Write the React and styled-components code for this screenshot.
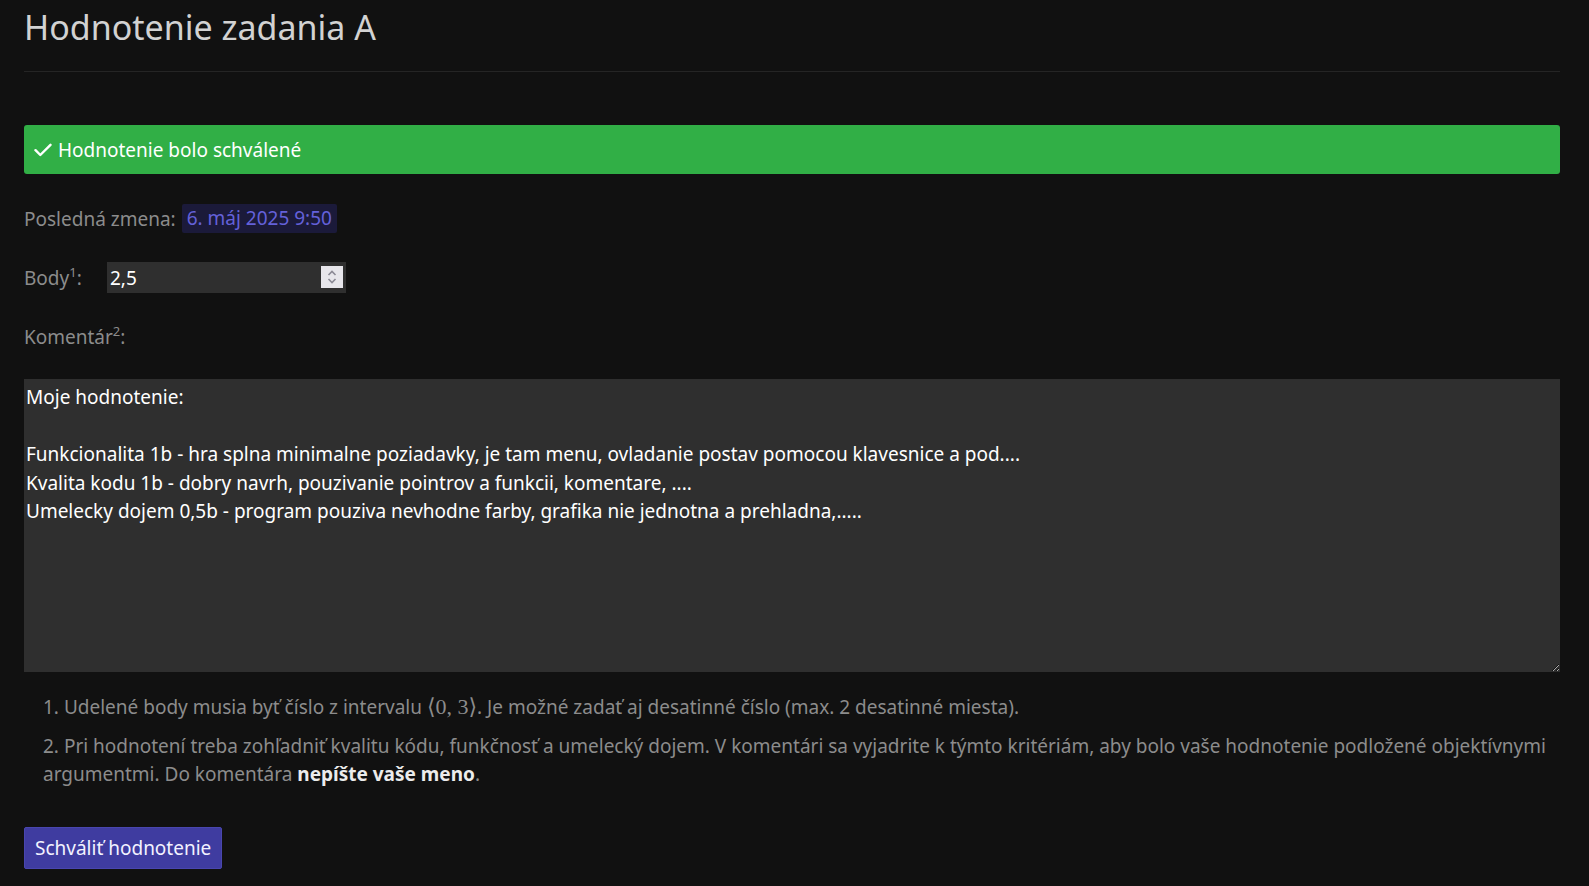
import styled, { createGlobalStyle } from 'styled-components';

const GlobalStyle = createGlobalStyle`
  html, body {
    margin: 0;
    padding: 0;
    background: #111111;
  }
  body {
    font-family: "Noto Sans", "Open Sans", sans-serif;
    font-size: 19px;
    line-height: 28px;
    color: #8c8c8c;
  }
`;

const Page = styled.div`
  padding: 5px 29px 17px 24px;
`;

const Title = styled.h1`
  margin: 0;
  font-size: 34px;
  line-height: 45px;
  font-weight: 400;
  color: #d2d2d2;
  padding-bottom: 21px;
  border-bottom: 1px solid #252525;
`;

const Alert = styled.div`
  margin-top: 53px;
  display: flex;
  align-items: center;
  gap: 6px;
  padding: 11px 10px 10px;
  background: #31af46;
  border-radius: 3px;
  color: #ffffff;
`;

const Field = styled.div`
  display: flex;
  align-items: center;
  margin-top: ${p => p.$gap}px;
  min-height: ${p => p.$height || 28}px;
`;

const Label = styled.span`
  min-width: ${p => p.$width || 0}px;
  margin-right: ${p => p.$space || 0}px;
  color: #8c8c8c;
  sup {
    font-size: 13px;
    line-height: 0;
    vertical-align: 8px;
  }
`;

const DateBadge = styled.span`
  display: inline-block;
  padding: 0 5px;
  line-height: 29px;
  background: #1b1a3a;
  color: #6461d9;
  border-radius: 2px;
`;

const NumberBox = styled.div`
  position: relative;
  width: 239px;
  height: 31px;
  background: #2f2f2f;
  display: flex;
  align-items: center;
`;

const NumberInput = styled.input`
  flex: 1;
  background: transparent;
  border: none;
  outline: none;
  color: #ffffff;
  font: inherit;
  padding: 0 3px;
  height: 31px;
`;

const Spinner = styled.div`
  position: absolute;
  right: 3px;
  top: 4px;
  width: 22px;
  height: 22px;
  background: #e7e6eb;
  display: flex;
  align-items: center;
  justify-content: center;
`;

const CommentArea = styled.textarea`
  display: block;
  box-sizing: border-box;
  width: 100%;
  height: 293px;
  margin-top: 28px;
  padding: 4px 2px 2px;
  background: #2f2f2f;
  border: none;
  outline: none;
  color: #ffffff;
  font-family: "Noto Sans", "Open Sans", sans-serif;
  font-size: 19px;
  line-height: 28.6px;
  resize: vertical;
`;

const Notes = styled.ol`
  margin: 21px 0 0;
  padding: 0 0 0 19px;
  list-style-position: inside;
  li {
    margin-bottom: 11px;
  }
  li:last-child {
    margin-bottom: 0;
  }
  b {
    color: #ececec;
    font-weight: 700;
  }
`;

const Interval = styled.span`
  font-family: "Liberation Serif", "DejaVu Serif", serif;
  font-size: 22px;
  color: #8c8c8c;
`;

const ApproveButton = styled.button`
  margin-top: 39px;
  padding: 6px 10px;
  background: #3f3ca0;
  border: 1px solid #4946ae;
  border-radius: 2px;
  color: #f2f2ff;
  font: inherit;
  line-height: 28px;
  cursor: pointer;
`;

const comment = `Moje hodnotenie:

Funkcionalita 1b - hra splna minimalne poziadavky, je tam menu, ovladanie postav pomocou klavesnice a pod....
Kvalita kodu 1b - dobry navrh, pouzivanie pointrov a funkcii, komentare, ....
Umelecky dojem 0,5b - program pouziva nevhodne farby, grafika nie jednotna a prehladna,.....`;

export default function App() {
  return (
    <Page>
      <GlobalStyle />
      <Title>Hodnotenie zadania A</Title>

      <Alert>
        <svg width="18" height="14" viewBox="0 0 18 14" fill="none">
          <path d="M1.5 7.2 L6.3 12 L16.5 1.8" stroke="#fff" strokeWidth="2.4" strokeLinecap="round" strokeLinejoin="round" />
        </svg>
        Hodnotenie bolo schválené
      </Alert>

      <Field $gap={30} $height={29}>
        <Label $space={6}>Posledná zmena:</Label>
        <DateBadge>6. máj 2025 9:50</DateBadge>
      </Field>

      <Field $gap={29} $height={31}>
        <Label $width={83}>Body<sup>1</sup>:</Label>
        <NumberBox>
          <NumberInput type="text" defaultValue="2,5" />
          <Spinner>
            <svg width="12" height="16" viewBox="0 0 12 16" fill="none">
              <path d="M2.5 6 L6 2.5 L9.5 6" stroke="#8b8a95" strokeWidth="1.6" />
              <path d="M2.5 10 L6 13.5 L9.5 10" stroke="#8b8a95" strokeWidth="1.6" />
            </svg>
          </Spinner>
        </NumberBox>
      </Field>

      <Field $gap={30}>
        <Label>Komentár<sup>2</sup>:</Label>
      </Field>

      <CommentArea defaultValue={comment} />

      <Notes>
        <li>
          Udelené body musia byť číslo z intervalu <Interval>⟨0, 3⟩</Interval>. Je možné zadať aj desatinné číslo (max. 2 desatinné miesta).
        </li>
        <li>
          Pri hodnotení treba zohľadniť kvalitu kódu, funkčnosť a umelecký dojem. V komentári sa vyjadrite k týmto kritériám, aby bolo vaše hodnotenie podložené objektívnymi argumentmi. Do komentára <b>nepíšte vaše meno</b>.
        </li>
      </Notes>

      <ApproveButton>Schváliť hodnotenie</ApproveButton>
    </Page>
  );
}
